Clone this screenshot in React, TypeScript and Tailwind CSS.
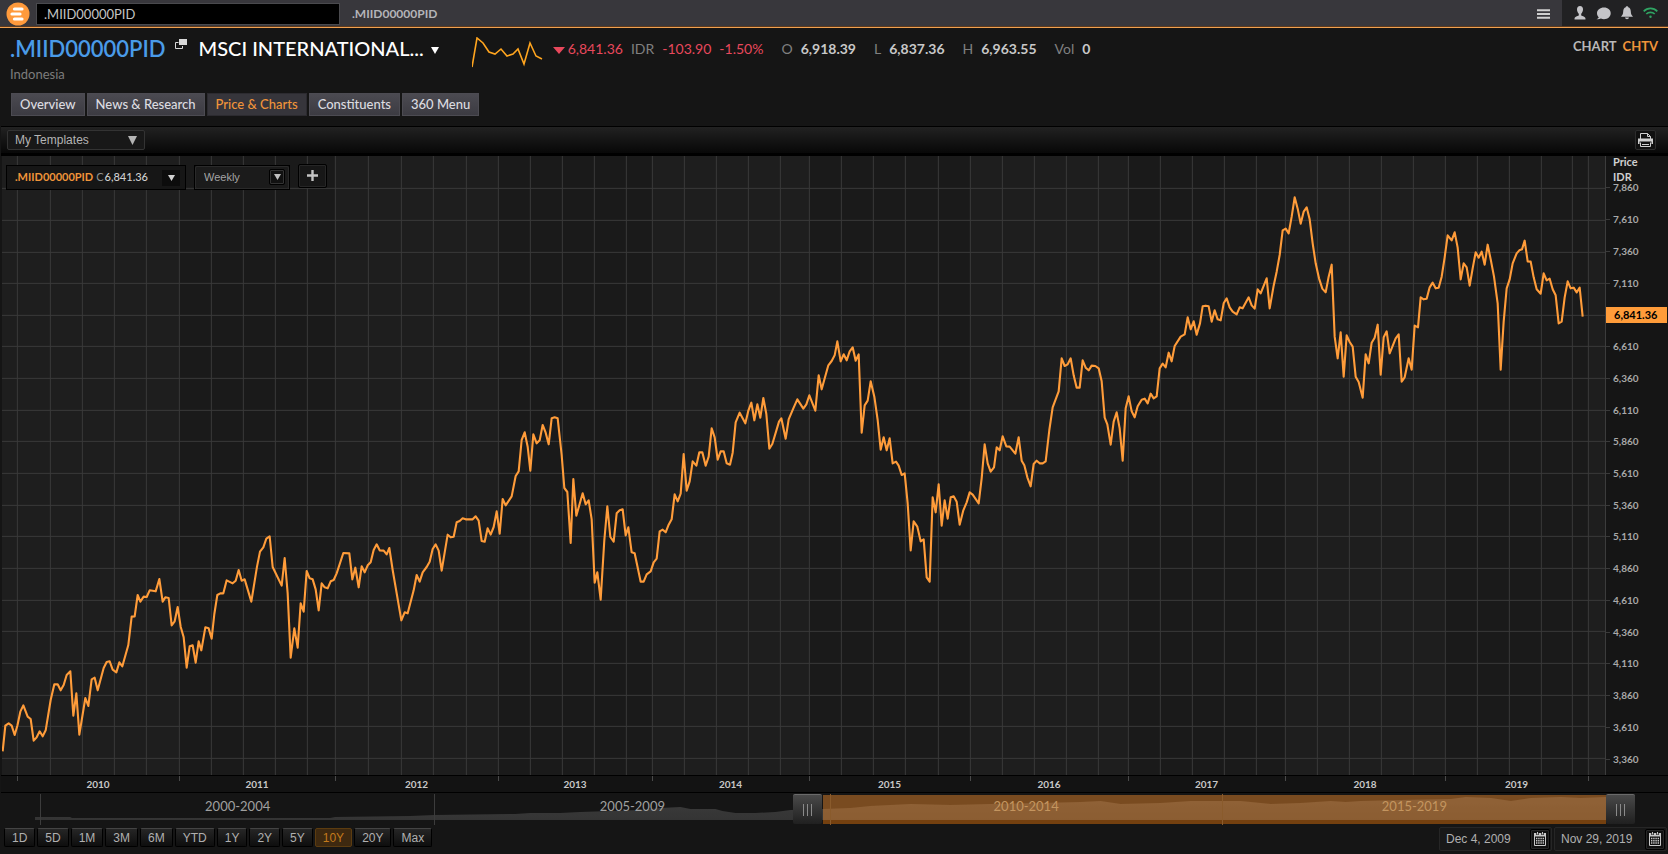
import React, { useState } from 'react'

type Point = [number, number]

type Quote = {
  label: string;
  value: string;
}

const tabs = ['Overview', 'News & Research', 'Price & Charts', 'Constituents', '360 Menu']

const quotes: Quote[] = [
  { label: 'O', value: '6,918.39' },
  { label: 'L', value: '6,837.36' },
  { label: 'H', value: '6,963.55' },
  { label: 'Vol', value: '0' },
]

const ranges = ['1D', '5D', '1M', '3M', '6M', 'YTD', '1Y', '2Y', '5Y', '10Y', '20Y', 'Max']

const years = ['', '2010', '2011', '2012', '2013', '2014', '2015', '2016', '2017', '2018', '2019', '']

const periods = ['', '2000-2004', '2005-2009', '2010-2014', '2015-2019']

const prices = [
  '7,860', '7,610', '7,360', '7,110', '6,860', '6,610', '6,360', '6,110', '5,860', '5,610',
  '5,360', '5,110', '4,860', '4,610', '4,360', '4,110', '3,860', '3,610', '3,360',
]

const gridX = [
  17, 50, 82, 114, 146, 179, 211, 243, 275, 307, 335, 368, 401, 433, 466, 498, 530, 562, 594, 626,
  652, 684, 716, 748, 780, 809, 841, 873, 905, 938, 970, 1002, 1034, 1066, 1098, 1128, 1160, 1192,
  1224, 1256, 1285, 1317, 1349, 1381, 1413, 1445, 1477, 1509, 1541, 1572, 1588,
]

const gridY = [188, 220, 252, 283, 315, 346, 378, 410, 441, 473, 505, 536, 568, 600, 631, 663, 695, 726, 758]

// every second year gets the darker shade
const bands: Point[] = [[179, 335], [498, 652], [809, 970], [1128, 1285], [1445, 1588]]

// weekly closes, three units to a pixel, one block for each stretch of years
const series = [
  {
    dx: 0,
    dy: 1380,
    points: '8,874 16,797 26,790 35,797 44,825 52,797 61,755 70,736 83,770 92,777 101,842 110,832 119,814 128,829 137,811 152,720 163,673 173,673 182,691 191,675 200,645 211,634 220,767 229,700 238,824 256,714 265,738 275,658 284,653 293,691 311,624 320,606 329,604 338,629 349,637 358,607 367,619 385,555 395,470 404,469 413,405 421,425 431,410 440,411 449,391 467,394 478,357 488,425 496,412 506,414 515,496 524,484 533,441 542,500 551,532 560,623 569,559 578,556 587,608 596,544 604,571 616,502 626,505 635,536 643,462 652,405 661,400 670,400 680,361 698,370 707,362 716,330 725,362 734,358 754,425 771,320 780,275 790,262 799,236 809,229 818,321 845,377 854,294 863,400 872,593 883,505 893,563 902,430 911,455 920,333 929,355 938,358 947,388 956,451 965,370 974,382 983,385 992,364 1001,360 1010,340 1030,279 1048,280 1057,358 1066,323 1076,382 1085,319 1094,337 1103,316 1112,307 1121,270 1130,253 1139,271 1151,272 1160,283 1168,264 1178,330',
  },
  {
    dx: 1200,
    dy: 1200,
    points: '4,661 14,637 23,640 41,571 50,525 59,545 68,517 80,501 89,485 98,447 107,433 116,452 125,512 143,404 152,412 161,410 170,367 179,363 188,355 197,358 218,358 227,349 236,362 245,423 254,425 263,385 272,404 281,381 290,334 299,401 308,297 317,316 335,289 347,228 356,214 365,120 374,97 383,140 391,212 400,103 410,130 419,121 428,75 437,98 446,133 455,55 464,52 473,55 485,165 493,264 502,276 512,429 520,237 529,347 548,280 557,313 566,301 575,358 584,548 592,517 602,599 613,420 622,319 631,411 641,425 650,340 659,331 668,328 677,406 685,382 695,457 704,460 722,545 731,545 740,523 752,514 761,487 770,476 779,394 788,389 797,397 806,374 815,358 824,283 833,304 842,281 851,162 860,272 869,244 878,184 889,197 898,157 907,157 917,197 926,170 935,85 944,112 953,179 962,154 971,154 980,190 990,194 998,158 1007,67 1019,38 1036,70 1045,32 1054,8 1063,61 1072,13 1081,53 1090,-6 1099,42 1108,146 1117,132 1137,65 1144,55 1157,116 1166,58 1180,25 1192,-2',
  },
  {
    dx: 2400,
    dy: 960,
    points: '10,266 19,253 28,226 46,272 56,166 65,208 85,136 95,123 104,106 112,64 122,124 131,103 140,121 149,94 158,82 167,122 176,103 185,338 194,256 203,242 212,184 223,230 233,300 242,389 251,352 260,391 269,355 278,430 288,425 296,437 305,465 314,460 323,550 332,691 341,604 352,620 362,664 371,658 380,772 389,785 398,532 407,577 416,493 425,617 434,541 443,596 452,532 461,529 470,545 479,614 490,571 500,547 509,517 518,524 536,550 545,475 554,373 563,430 572,455 582,442 590,382 599,391 608,349 619,379 629,380 646,401 656,352 665,422 673,436 682,472 692,499 701,432 710,422 719,430 728,430 737,424 748,330 758,262 776,214 785,115 794,138 803,133 812,115 821,166 830,203 839,203 848,121 857,143 866,151 875,137 886,138 896,145 905,184 914,293 922,313 932,374 941,305 950,277 959,325 968,422 977,265 986,229 995,274 1004,292 1013,259 1025,239 1034,236 1043,250 1052,221 1061,235 1070,229 1079,145 1088,131 1097,142 1106,98 1115,124',
  },
  {
    dx: 3360,
    dy: 780,
    points: '164,258 182,230 194,223 203,172 212,208 221,184 230,224 240,190 248,139 257,137 266,139 275,185 284,151 293,178 302,181 311,130 320,115 329,142 338,155 350,163 359,142 368,145 386,112 395,136 404,146 413,88 422,100',
  },
  {
    dx: 3600,
    dy: 540,
    points: '200,295 209,385 221,317 230,275 239,225 248,151 257,146 266,160 275,110 284,52 293,86 302,131 311,95 320,82 329,118 338,190 347,250 357,295 367,326 377,337 386,290 395,254 404,470 413,535 422,457 431,590 440,466 449,486 458,500 467,590 476,606 488,653 497,523 506,550 515,488 524,473 533,434 542,584 551,472 560,454 569,520 587,475 596,463 605,605 614,592 626,535 635,569 644,437 654,442 662,352 671,358 680,356 689,322 698,308 707,325 716,323 725,290 734,232 743,166 755,181 764,157 773,203 782,298 791,250 800,262 809,317 818,265 827,217 836,233 845,215 854,254 863,194 872,238 882,290 893,370 902,569 911,425 920,325 929,298 938,250 950,220 958,211 966,208 974,182 983,244 992,245 1001,292 1010,328 1022,341 1031,280 1040,301 1049,296 1058,328 1067,346 1076,430 1085,425 1094,352 1103,304 1112,325 1121,323 1130,337 1139,323 1148,410',
  },
]

const priceLine = series
  .map(({ dx, dy, points }) =>
    points
      .split(' ')
      .map((pair) => {
        const [x, y] = pair.split(',').map(Number)
        return `${x + dx},${y + dy}`
      })
      .join(' ')
  )
  .join(' ')

const Logo = () => (
  <svg className="h-6 w-6 shrink-0" viewBox="0 0 24 24">
    <circle cx="12" cy="12" r="11.5" fill="#ff9a3c" />
    <g stroke="#fff" strokeWidth="3.2" strokeLinecap="round">
      <path d="M8.500 7H16" />
      <path d="M6 12h8" />
      <path d="M8.500 17H16" />
    </g>
  </svg>
)

const Caret = ({ className }: { className: string }) => (
  <svg className={className} viewBox="0 0 10 10" preserveAspectRatio="none" fill="currentColor">
    <path d="M0 0h10L5 10z" />
  </svg>
)

const CalendarIcon = () => (
  <svg className="h-4 w-3.5" viewBox="0 0 14 16">
    <path d="M1.500 2.500h11v12h-11z" fill="none" stroke="#c8c8c8" />
    <path d="M1 2h12v3.500H1z" fill="#c8c8c8" />
    <path d="M4.500 1v3M9.500 1v3" stroke="#111" strokeWidth="2.4" />
    <path d="M4.500 1v2.500M9.500 1v2.500" stroke="#c8c8c8" />
    <path d="M3 7.500h8M3 9.700h8M3 12h8" stroke="#c8c8c8" strokeWidth="1.4" strokeDasharray="1.4 0.8" />
  </svg>
)

const TopBar = () => {
  const [query, setQuery] = useState('.MIID00000PID')

  return (
    <div className="flex h-7 shrink-0 items-center border-b border-[#f0a050] bg-[#38373c] shadow-[inset_0_-1px_0_#5a3a20]">
      <div className="flex flex-1 items-center pl-[6px]">
        <Logo />
        <input
          aria-label="Search"
          className="ml-[6px] h-[22px] w-[304px] border border-[#4a4a4e] bg-black pl-[7px] text-[13px] text-[#c4c4c4] outline-none"
          value={query}
          onChange={(e) => setQuery(e.target.value)}
        />
        <span className="ml-3 text-[12px] font-bold text-[#b4b4b8]">.MIID00000PID</span>
      </div>
      <button aria-label="Menu" className="mr-3 text-[#d0d0d0]">
        <svg className="h-3 w-[13px]" viewBox="0 0 13 12">
          <path d="M0 2.200h13M0 6h13M0 9.800h13" stroke="currentColor" strokeWidth="2" />
        </svg>
      </button>
      <div className="flex h-[26px] items-center gap-[10px] self-start bg-[#212123] pr-[10px] pl-3 text-[#c4c4c8]">
        <button aria-label="Profile">
          <svg className="h-[14px] w-3" viewBox="0 0 12 14" fill="currentColor">
            <path d="M6 0C4 0 3 1.300 3 3.200c0 2 .8 3.400 1.800 4.600v1.800C3.200 10.500 1 10.800.6 12L.5 13.500h11L11.400 12c-.4-1.200-2.600-1.500-4.200-2.400V7.800C8.200 6.600 9 5.200 9 3.200 9 1.300 8 0 6 0z" />
          </svg>
        </button>
        <button aria-label="Messages">
          <svg className="h-[13px] w-[15px]" viewBox="0 0 15 13" fill="currentColor">
            <path d="M8 .5C4 .5 1 3 1 6.300c0 1.700.7 3 1.800 4.100-.5.800-1.300 1.400-2.300 1.800 1.800.300 3.300 0 4.400-.6.900.400 2 .600 3.100.6 4 0 6.700-2.600 6.700-5.900S12 .5 8 .5z" />
          </svg>
        </button>
        <button aria-label="Alerts">
          <svg className="h-[14px] w-3" viewBox="0 0 12 14" fill="currentColor">
            <path d="M6 .3c-.8 0-1.200.4-1.200 1C3 1.900 2.300 3.400 2.200 5.500 2.100 8 1.500 9 0 10.800h12C10.500 9 9.900 8 9.800 5.500 9.700 3.400 9 1.900 7.200 1.300c0-.6-.4-1-1.200-1zM4 11.600h4c-.2 1-1 1.700-2 1.700s-1.800-.7-2-1.700z" />
          </svg>
        </button>
        <svg className="h-3 w-[15px]" viewBox="0 0 15 12" fill="none" stroke="#2fa463" strokeWidth="1.700">
          <path d="M.7 4.300a9.500 9.500 0 0 1 13.600 0" />
          <path d="M3.300 7a6 6 0 0 1 8.400 0" />
          <circle cx="7.500" cy="9.800" r="1.200" fill="#2fa463" stroke="none" />
        </svg>
      </div>
    </div>
  )
}

const Header = () => {
  const [active, setActive] = useState('Price & Charts')

  return (
    <header className="flex h-[98px] shrink-0 flex-col px-[10px] pt-px">
      <div className="flex h-[38px] items-center">
        <h1 className="text-[22px] font-semibold text-[#4a9be8]">.MIID00000PID</h1>
        <svg className="mb-2 ml-[9px] h-[10px] w-3" viewBox="0 0 12 10">
          <path d="M3.500 3.500H.5v6h7V7" fill="none" stroke="#d8d8d8" />
          <path d="M4 0h8v6H4z" fill="#d8d8d8" />
        </svg>
        <button className="ml-3 flex items-center text-[20px] font-medium text-white">
          MSCI INTERNATIONAL...
          <Caret className="mt-1 ml-[7px] h-[7px] w-2" />
        </button>
        <svg className="mt-2 ml-[33px] h-[31px] w-[71px]" viewBox="0 0 71 31" fill="none">
          <polyline
            points="0,30 5,1 11,6 17,15 23,17 29,12 35,19 41,17 46,12 52,27 58,6 64,19 70,22"
            stroke="#ffa51f"
            strokeWidth="1.600"
          />
        </svg>
        <div className="ml-[10px] flex items-center text-[14px]">
          <Caret className="mt-1 h-[7px] w-3 text-[#e8485c]" />
          <span className="ml-[3px] text-[#e8485c]">6,841.36</span>
          <span className="ml-2 text-[#808080]">IDR</span>
          <span className="ml-2 text-[#e8485c]">-103.90</span>
          <span className="ml-2 text-[#e8485c]">-1.50%</span>
          {quotes.map((quote) => (
            <span key={quote.label} className="ml-[18px] flex gap-2">
              <span className="text-[#808080]">{quote.label}</span>
              <b className="text-[#c8c8c8]">{quote.value}</b>
            </span>
          ))}
        </div>
        <div className="mb-0.5 ml-auto flex gap-[6px] text-[13px] font-bold">
          <span className="text-[#b8b8b8]">CHART</span>
          <span className="text-[#f0943a]">CHTV</span>
        </div>
      </div>
      <p className="h-[26px] text-[13px] leading-[14px] text-[#7c7c7c]">Indonesia</p>
      <nav className="flex gap-0.5 pl-px">
        {tabs.map((tab) => (
          <button
            key={tab}
            onClick={() => setActive(tab)}
            className={
              tab === active
                ? 'h-[23px] border border-[#2c2b30] bg-[#36353b] px-2 text-[13px] font-medium text-[#f0943a]'
                : 'h-[23px] border border-[#4c4b52] bg-linear-to-b from-[#4b4a51] to-[#3c3b42] px-2 text-[13px] font-medium text-[#dcdce0]'
            }
          >
            {tab}
          </button>
        ))}
      </nav>
    </header>
  )
}

const Toolbar = () => (
  <div className="ml-px flex h-[30px] shrink-0 items-center justify-between border-t border-b-[3px] border-black bg-linear-to-b from-[#222222] to-[#080808] pr-3 pl-[6px] font-['Liberation_Sans',Arial,sans-serif]">
    <div className="relative flex">
      <select
        aria-label="Templates"
        className="h-5 w-[138px] appearance-none rounded-xs border border-[#333333] bg-[#181818] pl-[7px] text-[12px] text-[#b4b4b4] outline-none"
      >
        <option>My Templates</option>
      </select>
      <Caret className="pointer-events-none absolute top-[6px] right-2 h-[9px] w-[9px] text-[#b4b4b4]" />
    </div>
    <button aria-label="Print" className="flex h-5 w-[21px] items-center justify-center rounded-xs border border-[#2c2c2c] bg-[#101010]">
      <svg className="h-[14px] w-[15px]" viewBox="0 0 15 14" fill="none" stroke="#d0d0d0">
        <path d="M2.500 6V.5h7l3 3V6M9.500.5v3h3" />
        <path d="M0 5.500h15v5.500h-1.500V8.500h-12V11H0z" fill="#d0d0d0" stroke="none" />
        <path d="M2.500 9.500v4h10v-4M4 11.500h7" />
      </svg>
    </button>
  </div>
)

const PriceChart = () => (
  <div className="ml-0.5 flex min-h-[400px] flex-1 bg-[#151515]">
    <div className="relative flex-1 border-r border-[#3c3c3c]">
      <svg className="absolute inset-0 h-full w-full" viewBox="6 468 4809 1857" preserveAspectRatio="none">
        <rect x="6" y="468" width="4809" height="1857" fill="#1e1e1e" />
        {bands.map(([from, to]) => (
          <rect key={from} x={from * 3} y="468" width={(to - from) * 3} height="1857" fill="#1a1a1a" />
        ))}
        <g stroke="#3a3a3a">
          {gridX.map((x) => (
            <line key={x} x1={x * 3 + 1} x2={x * 3 + 1} y1="468" y2="2325" vectorEffect="non-scaling-stroke" />
          ))}
          {gridY.map((y) => (
            <line key={y} x1="6" x2="4815" y1={y * 3 + 1} y2={y * 3 + 1} vectorEffect="non-scaling-stroke" />
          ))}
        </g>
        <polyline
          points={priceLine}
          fill="none"
          stroke="#ff9c3a"
          strokeWidth="2.100"
          strokeLinejoin="round"
          vectorEffect="non-scaling-stroke"
        />
      </svg>
      <div className="relative flex items-start pt-2 pl-1">
        <button className="mt-px flex h-[25px] w-[180px] items-center border border-black bg-[#161616] pr-[5px] pl-2">
          <span className="text-[11px] font-bold text-[#f0943a]">.MIID00000PID</span>
          <span className="ml-[3px] text-[11px] text-[#909090]">C</span>
          <span className="ml-px text-[11px] font-medium text-[#d0d0d0]">6,841.36</span>
          <span className="ml-auto flex h-4 w-[18px] items-center justify-center bg-[#0c0c0c]">
            <Caret className="h-[6px] w-[7px] text-[#d0d0d0]" />
          </span>
        </button>
        <div className="relative mt-px ml-2 flex border border-black">
          <select
            aria-label="Interval"
            className="h-[23px] w-[94px] appearance-none rounded-xs border border-[#2a2a2a] bg-[#1b1b1b] pl-2 font-['Liberation_Sans',Arial,sans-serif] text-[11px] text-[#a4a4a4] outline-none"
          >
            <option>Weekly</option>
          </select>
          <span className="pointer-events-none absolute top-[3px] right-1 flex h-4 w-4 items-center justify-center rounded-xs border border-black bg-[#111111] shadow-[inset_0_0_0_1px_#333333]">
            <Caret className="h-[6px] w-[7px] text-[#c0c0c0]" />
          </span>
        </div>
        <button
          aria-label="Add"
          className="ml-2 flex h-6 w-[29px] items-center justify-center rounded-xs border border-black bg-[#171717] pb-0.5 shadow-[inset_0_0_0_1px_#262626]"
        >
          <svg className="h-[11px] w-[11px]" viewBox="0 0 11 11">
            <path d="M5.500 0v11M0 5.500h11" stroke="#c4c4c4" strokeWidth="2.400" />
          </svg>
        </button>
      </div>
    </div>
    <div className="relative flex w-[62px] flex-col pt-4 text-[10px] font-bold text-[#a8a8a8]">
      <div className="absolute -top-0.5 left-[7px] text-[11px] leading-[15px] text-[#d0d0d0]">
        <p>Price</p>
        <p>IDR</p>
      </div>
      {prices.map((price) => (
        <div key={price} className="flex flex-1 items-center">
          {price === '6,860' ? (
            <span className="h-4 w-[61px] bg-[#ff9c3a] pl-2 text-[11px] leading-4 text-black">6,841.36</span>
          ) : (
            <>
              <span className="h-px w-1 bg-[#3a3a3a]" />
              <span className="pl-[3px]">{price}</span>
            </>
          )}
        </div>
      ))}
    </div>
  </div>
)

const YearAxis = () => (
  <div className="ml-px flex h-[18px] shrink-0 border-y border-black bg-[#131313] pr-[63px] pl-px">
    <div className="grid flex-1 grid-cols-[15fr_162fr_156fr_163fr_154fr_157fr_161fr_158fr_157fr_160fr_143fr_17fr] text-center text-[10px] leading-4 font-bold text-[#c8c8c8]">
      {years.map((year, i) => (
        <span key={i} className="relative">
          {i > 0 && <i className="absolute top-0 left-0 h-[5px] w-px bg-[#4a4a4a]" />}
          {year}
        </span>
      ))}
    </div>
  </div>
)

const Handle = () => (
  <span className="flex h-[30px] w-[29px] shrink-0 items-center justify-center gap-[3px] rounded-xs border-t border-[#6a6a6a] bg-linear-to-b from-[#4a4a4a] to-[#202020]">
    <i className="h-3 w-px bg-[#8a8a8a]" />
    <i className="h-3 w-px bg-[#8a8a8a]" />
    <i className="h-3 w-px bg-[#8a8a8a]" />
  </span>
)

const Navigator = () => (
  <div className="ml-0.5 flex h-8 shrink-0 items-start pt-px pr-[33px]">
    <div className="relative h-[31px] flex-1">
      <svg className="absolute inset-0 h-full w-full" viewBox="2 794 1603 31" preserveAspectRatio="none">
        <defs>
          <linearGradient id="nav" x1="0" y1="0" x2="0" y2="1">
            <stop offset="0" stopColor="#3c3c3c" />
            <stop offset="1" stopColor="#343434" />
          </linearGradient>
        </defs>
        <polygon
          points="35,820 35,817 70,817 72,818 330,818 335,817 410,816 434,815 515,814 530,813 560,813 580,812 610,811 640,810 660,808 680,807 690,809 715,809 722,811 735,813 755,813 775,812 790,810 823,809 850,808 870,806 910,804 950,805 990,804 1040,803 1080,802 1100,801 1120,804 1160,803 1190,801 1240,801 1270,804 1300,803 1330,801 1345,802 1360,801 1400,800 1450,799 1465,797 1490,798 1510,801 1530,798 1560,797 1580,798 1605,797 1605,820"
          fill="url(#nav)"
        />
      </svg>
      <div className="absolute inset-0 flex items-start">
        <div className="w-[49.300%]" />
        <Handle />
        <div className="ml-px mt-px h-[29px] flex-1 border-b-4 border-[#74400f] bg-[#ff9430]/43 bg-clip-padding" />
      </div>
      <div className="relative grid h-full grid-cols-[38fr_394fr_395fr_392fr_384fr] text-center text-[13px] leading-6">
        {periods.map((period, i) => (
          <span
            key={i}
            className={
              i === 0
                ? ''
                : i < 3
                  ? 'border-l border-[#3c3c3c] text-[#a0a0a0]'
                  : 'border-l border-[#8a5b2c] text-[#c4955f]'
            }
          >
            {period}
          </span>
        ))}
      </div>
    </div>
    <Handle />
  </div>
)

const DateField = ({ label, value }: { label: string; value: string }) => (
  <div className="flex h-6 w-[113px] items-center rounded-xs border border-[#262626] bg-[#181818] pr-px">
    <input
      aria-label={label}
      className="h-full min-w-0 flex-1 bg-transparent pl-[6px] text-[12px] text-[#b0b0b0] outline-none"
      defaultValue={value}
    />
    <button
      aria-label={`Pick ${label}`}
      className="flex h-[21px] w-5 items-center justify-center rounded-xs border border-black bg-[#111111] shadow-[inset_0_0_0_1px_#262626]"
    >
      <CalendarIcon />
    </button>
  </div>
)

const Footer = () => {
  const [range, setRange] = useState('10Y')

  return (
    <footer className="flex h-[29px] shrink-0 items-start justify-between pt-0.5 pr-px pl-1 font-['Liberation_Sans',Arial,sans-serif] text-[12px]">
      <div className="flex gap-0.5 pt-px">
        {ranges.map((item) => (
          <button
            key={item}
            onClick={() => setRange(item)}
            className={
              item === range
                ? 'h-[19px] rounded-xs border border-[#5c3c10] bg-[#3e2910] px-[7px] leading-4 text-[#c47a1c]'
                : 'h-[19px] rounded-xs border border-black border-t-[#444444] bg-linear-to-b from-[#262626] to-[#0e0e0e] px-[7px] leading-4 text-[#b0b0b0]'
            }
          >
            {item}
          </button>
        ))}
      </div>
      <div className="flex gap-0.5">
        <DateField label="start date" value="Dec 4, 2009" />
        <DateField label="end date" value="Nov 29, 2019" />
      </div>
    </footer>
  )
}

const App = () => {
  return (
    <div className="flex min-h-screen flex-col bg-[#151515] font-[Lato,'Liberation_Sans',sans-serif]">
      <TopBar />
      <Header />
      <Toolbar />
      <PriceChart />
      <YearAxis />
      <Navigator />
      <Footer />
    </div>
  )
}

export default App
